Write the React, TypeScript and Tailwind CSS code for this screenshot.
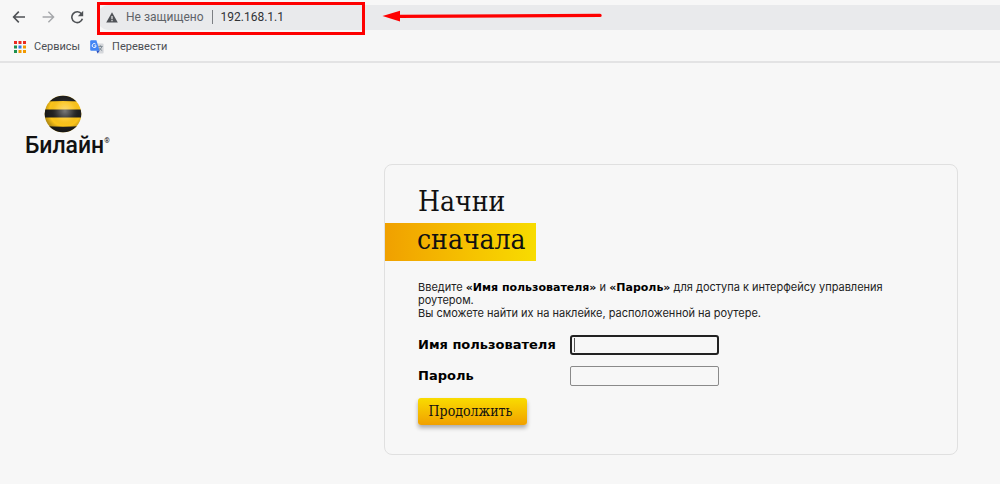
import React from "react";

const appsDots = [
  "#ea2a1f", "#ea2a1f", "#ea2a1f",
  "#1e9150", "#2f7de8", "#f29900",
  "#1e9150", "#f29900", "#f29900",
];

function BackIcon() {
  return (
    <svg viewBox="0 0 14 14" className="h-3.5 w-3.5" fill="none" stroke="currentColor" strokeWidth="1.6">
      <path d="M13 7H1.8M6.8 1.6L1.6 7L6.8 12.4" />
    </svg>
  );
}

function ForwardIcon() {
  return (
    <svg viewBox="0 0 14 14" className="h-3.5 w-3.5" fill="none" stroke="currentColor" strokeWidth="1.4">
      <path d="M1.6 7H12.4M7.4 1.8L12.6 7L7.4 12.2" />
    </svg>
  );
}

function ReloadIcon() {
  return (
    <svg viewBox="0 0 14 14" className="h-3.5 w-3.5" fill="none">
      <path d="M11.6 4A5.4 5.4 0 1 0 12.4 8.8" stroke="currentColor" strokeWidth="1.6" />
      <path d="M13.2 0.8V6.2H7.8Z" fill="currentColor" />
    </svg>
  );
}

function WarningIcon() {
  return (
    <svg viewBox="0 0 12 11" className="h-[11px] w-3 shrink-0">
      <path d="M6 0.3L11.8 10.6H0.2Z" fill="#505358" />
      <path d="M5.4 4H6.6V7.2H5.4ZM5.4 8.1H6.6V9.3H5.4Z" fill="#e9eaec" />
    </svg>
  );
}

function AppsIcon() {
  return (
    <svg viewBox="0 0 12 12" className="h-3 w-3">
      {appsDots.map((color, i) => (
        <rect key={i} x={(i % 3) * 4.5} y={Math.floor(i / 3) * 4.5} width="3" height="3" fill={color} />
      ))}
    </svg>
  );
}

function TranslateIcon() {
  return (
    <svg viewBox="0 0 14 14" className="h-3.5 w-3.5">
      <path d="M5 3.4H12.6Q13.6 3.4 13.6 4.4V12.4Q13.6 13.4 12.6 13.4H7.8Z" fill="#d6d8dc" />
      <path d="M8.2 6.4H12.6M10.4 5.4V6.4M12 6.4Q11.4 9 8.8 10.4M9.2 7.6Q10.2 9.6 12.2 10.6" stroke="#6f7c86" strokeWidth="0.8" fill="none" />
      <path d="M1.2 0.2H6.4L9.6 10.8H1.2Q0.2 10.8 0.2 9.8V1.2Q0.2 0.2 1.2 0.2Z" fill="#4285f4" />
      <path d="M6.4 10.8H9.6L7.6 13.6Z" fill="#2a4fc0" />
      <path d="M5.7 4.2A2 2 0 1 0 6.2 5.8H4.4" stroke="#fff" strokeWidth="0.9" fill="none" />
    </svg>
  );
}

function BeelineBall() {
  return (
    <svg viewBox="0 0 38 38" className="h-[38px] w-[38px]">
      <defs>
        <clipPath id="ball">
          <circle cx="19" cy="19" r="18.3" />
        </clipPath>
        <radialGradient id="shade" cx="0.55" cy="0.42" r="0.58">
          <stop offset="0" stopColor="#fff" stopOpacity="0.4" />
          <stop offset="0.4" stopColor="#fff" stopOpacity="0.1" />
          <stop offset="0.7" stopColor="#000" stopOpacity="0" />
          <stop offset="1" stopColor="#000" stopOpacity="0.35" />
        </radialGradient>
      </defs>
      <g clipPath="url(#ball)">
        <rect width="38" height="38" fill="#fcc419" />
        <path d="M0 0H38V6.6Q19 5.4 0 6.6Z" fill="#1f1f1f" />
        <path d="M0 14.4H38V22.6H0Z" fill="#1f1f1f" />
        <path d="M0 31Q19 32.4 38 31V38H0Z" fill="#1f1f1f" />
        <rect width="38" height="38" fill="url(#shade)" />
      </g>
    </svg>
  );
}

function BrowserBar() {
  return (
    <header className="border-b-2 border-[#e3e3e4] font-['Roboto','Noto_Sans',sans-serif] text-[#5f6368]">
      <div className="flex h-[34px] items-center pl-3">
        <nav className="flex w-[85px] shrink-0 items-center gap-[15px]">
          <button type="button" aria-label="Назад" className="text-[#4f5256]"><BackIcon /></button>
          <button type="button" aria-label="Вперёд" className="text-[#a5a7aa]"><ForwardIcon /></button>
          <button type="button" aria-label="Обновить" className="text-[#4f5256]"><ReloadIcon /></button>
        </nav>
        <div className="relative flex h-[25px] flex-1 items-center rounded-l-xl bg-[#e9eaec] pl-[9px] text-xs">
          <WarningIcon />
          <span className="ml-2">Не защищено</span>
          <span className="mx-2 h-3.5 w-px bg-[#7c7f83]"></span>
          <input type="text" aria-label="Адрес" defaultValue="192.168.1.1" className="w-28 bg-transparent text-[#303236] outline-none" />

          {/* Highlight around the address and the arrow that points to it */}
          <div className="absolute -top-[3px] left-0 h-[33px] w-[268px] border-[3px] border-[#fe0000]"></div>
          <svg viewBox="0 0 220 12" className="absolute left-[285px] top-[5px] h-3 w-[220px]">
            <path d="M16 6.4L218 5.4" stroke="#fe0000" strokeWidth="3.4" strokeLinecap="round" />
            <path d="M0.5 6L18 0.8V11.4Z" fill="#fe0000" />
          </svg>
        </div>
      </div>
      <div className="flex h-[27px] items-start gap-2.5 pl-3.5 pt-1 text-[11px] leading-[17px] text-[#4c4f54]">
        <a href="#services" className="flex items-center gap-2">
          <AppsIcon />
          Сервисы
        </a>
        <a href="#translate" className="flex items-center gap-2">
          <TranslateIcon />
          Перевести
        </a>
      </div>
    </header>
  );
}

function Logo() {
  return (
    <div className="flex w-[384px] shrink-0 pl-[25px] pt-8">
      <div className="flex flex-col items-start">
        <div className="pl-[19px]"><BeelineBall /></div>
        <div className="flex items-start font-['Roboto',sans-serif] text-[23px] font-medium leading-[26px] text-[#111]">
          Билайн
          <span className="pt-1 text-[7px] leading-2 font-normal">®</span>
        </div>
      </div>
    </div>
  );
}

function LoginCard() {
  return (
    <section className="mr-[42px] mt-[101px] flex-1 rounded-lg border border-[#e0e0e0] pb-[29px] pt-5 font-['DejaVu_Sans',Verdana,sans-serif] text-black">
      <h1 className="font-['DejaVu_Serif_Condensed','DejaVu_Serif',serif] text-[28px] leading-[34px] text-[#111]">
        <span className="block pb-1 pl-[33px]">Начни</span>
        <span className="block w-[151px] bg-gradient-to-r from-[#f0a000] to-[#f8dc00] pb-1 pl-8">сначала</span>
      </h1>

      <p className="mt-5 pl-[33px] pr-10 font-['Inter',sans-serif] text-[11px] leading-[13px] text-[#222]">
        Введите <b className="font-['DejaVu_Sans',Verdana,sans-serif] leading-none text-black">«Имя пользователя»</b> и{" "}
        <b className="font-['DejaVu_Sans',Verdana,sans-serif] leading-none text-black">«Пароль»</b> для доступа к интерфейсу управления роутером.
        <br />
        Вы сможете найти их на наклейке, расположенной на роутере.
      </p>

      <form className="mt-[15px] pl-[33px]" onSubmit={(e) => e.preventDefault()}>
        <div className="grid grid-cols-[152px_149px] items-center gap-y-[11px] text-[13px] font-bold leading-5">
          <label htmlFor="username">Имя пользователя</label>
          <div className="relative">
            <input id="username" type="text" className="block h-5 w-full rounded-[3px] border-2 border-[#222] bg-transparent px-1 text-xs font-normal outline-none" />
            <span className="absolute left-1 top-[3px] h-3.5 w-px bg-[#555]"></span>
          </div>
          <label htmlFor="password">Пароль</label>
          <input id="password" type="password" className="block h-5 w-full rounded-[2px] border border-[#8a8a8a] bg-transparent px-1 text-xs font-normal outline-none" />
        </div>
        <button
          type="submit"
          className="mt-3 block h-[27px] w-[109px] rounded-[3px] bg-gradient-to-b from-[#f9dc00] to-[#f0a000] pr-1 font-['DejaVu_Serif_Condensed','DejaVu_Serif',serif] text-[14px] text-[#111] shadow-[0_3px_4px_rgba(0,0,0,0.3)]"
        >
          Продолжить
        </button>
      </form>
    </section>
  );
}

export default function App() {
  return (
    <div className="min-h-screen bg-[#f7f7f7]">
      <BrowserBar />
      <main className="flex items-start">
        <Logo />
        <LoginCard />
      </main>
    </div>
  );
}
